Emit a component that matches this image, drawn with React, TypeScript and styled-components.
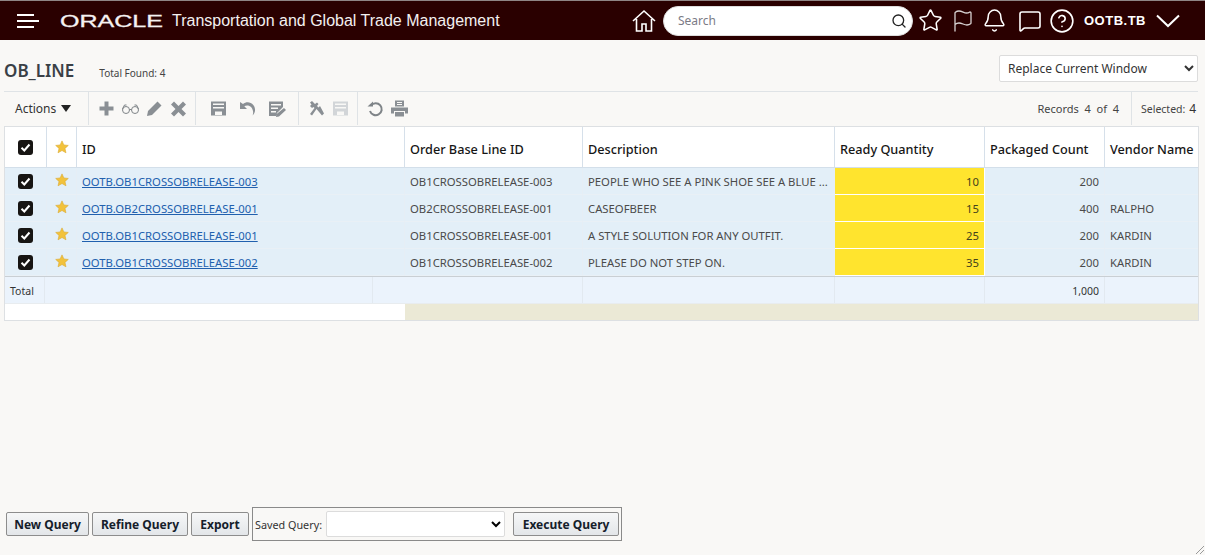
import React from "react";
import styled, { createGlobalStyle } from "styled-components";
import { Star, Flag, Bell, MessageSquare, CircleHelp, Search as SearchIcon } from "lucide-react";

const Global = createGlobalStyle`
  html, body { margin: 0; padding: 0; height: 100%; background: #f9f8f6; overflow: hidden; }
  body { font-family: "Noto Sans", "Open Sans", sans-serif; font-size: 12px; color: #333; }
  #root { height: 100%; }
`;

const Page = styled.div`
  position: relative;
  height: 555px;
  display: flex;
  flex-direction: column;
`;

const TopBar = styled.header`
  height: 39px;
  border-top: 1px solid #8f8585;
  background: #2a0000;
  display: flex;
  align-items: center;
  color: #fff;
`;
const Burger = styled.div`
  width: 22px;
  margin-left: 17px;
  display: flex;
  flex-direction: column;
  gap: 4px;
  span { display: block; height: 2px; background: #fff; width: 17px; }
  span:nth-child(2) { width: 22px; }
`;
const LogoWrap = styled.svg`
  margin-left: 21px;
  width: 105px;
  height: 20px;
  flex: none;
`;
const AppName = styled.div`
  margin-left: 7px;
  font: 16px "Liberation Sans", Arial, sans-serif;
  color: #f3f0f0;
  white-space: nowrap;
  width: 455px;
`;
const IconBtn = styled.div<{ $ml?: number }>`
  display: flex;
  align-items: center;
  margin-left: ${(p) => p.$ml ?? 0}px;
  color: #fff;
`;
const SearchBox = styled.div`
  margin-left: 6px;
  background: #fff;
  border-radius: 15px;
  border: 1px solid #ddd;
  display: flex;
  align-items: center;
  justify-content: space-between;
  padding: 0 5px 0 14px;
  color: #7b7b86;
  font-size: 12px;
  width: 229px;
  height: 28px;
  svg { color: #222; }
`;
const User = styled.div`
  margin-left: 9px;
  font: bold 13px "Liberation Sans", Arial, sans-serif;
  letter-spacing: 0.5px;
  width: 62px;
  white-space: nowrap;
`;

const TitleRow = styled.div`
  height: 51px;
  margin: 0 7px 0 4px;
  border-bottom: 1px solid #dfe3e6;
  display: flex;
  align-items: center;
`;
const Title = styled.h1`
  margin: 9px 0 0;
  font-size: 17px;
  font-weight: 600;
  color: #3a4046;
`;
const TotalFound = styled.span`
  margin: 15px 0 0 25px;
  font-size: 10px;
  color: #444;
`;
const WindowSelect = styled.select`
  margin: 5px 0 0 auto;
  width: 199px;
  height: 27px;
  background: #fff;
  border: 1px solid #dcdcdc;
  border-radius: 2px;
  font: 12px "Noto Sans", sans-serif;
  color: #333;
  padding-left: 4px;
`;

const Toolbar = styled.div`
  height: 33px;
  margin: 0 7px 1px 4px;
  display: flex;
  align-items: stretch;
`;
const ToolGroup = styled.div<{ $w: number; $gap: number; $pad: number; $noLine?: boolean }>`
  width: ${(p) => p.$w}px;
  box-sizing: border-box;
  border-right: ${(p) => (p.$noLine ? "none" : "1px solid #dfe3e6")};
  display: flex;
  align-items: center;
  flex: none;
  padding-left: ${(p) => p.$pad}px;
  gap: ${(p) => p.$gap}px;
  color: #333;
  font-size: 12px;
`;
const Tool = styled.svg<{ $tone?: string }>`
  width: 19px;
  height: 19px;
  flex: none;
  fill: ${(p) => p.$tone ?? "#8a8f94"};
`;
const LineTool = styled(Tool)`
  fill: none;
  stroke: #7f8488;
`;
const Right = styled.div`
  margin-left: auto;
  display: flex;
  align-items: stretch;
`;
const RecordInfo = styled.div`
  display: flex;
  align-items: center;
  padding-right: 12px;
  font-size: 11px;
  color: #444;
  white-space: pre;
`;
const SelectedInfo = styled.div`
  border-left: 1px solid #dfe3e6;
  display: flex;
  align-items: center;
  padding-left: 9px;
  font-size: 10.5px;
  color: #444;
  width: 67px;
  box-sizing: border-box;
  b { font-weight: 400; font-size: 12px; margin-left: 4px; color: #333; }
`;

const TableWrap = styled.div`
  margin: 0 6px 0 4px;
  border: 1px solid #dde0e3;
  background: #fff;
  width: 1195px;
  box-sizing: border-box;
`;
const cols = "42px 30px 328px 178px 252px 150px 120px 93px";
const Row = styled.div<{ $h: number }>`
  display: grid;
  grid-template-columns: ${cols};
  height: ${(p) => p.$h}px;
`;
const HeadCell = styled.div`
  display: flex;
  align-items: center;
  padding: 3px 0 0 5px;
  background: #fff;
  border-right: 1px solid #d6e0ea;
  border-bottom: 1px solid #d3dfea;
  font-size: 12.7px;
  font-weight: 500;
  color: #161616;
  white-space: nowrap;
  &:last-child { border-right: none; }
`;
const CenterHead = styled(HeadCell)`
  justify-content: center;
  padding: 0;
`;
const Cell = styled.div<{ $right?: boolean; $hl?: boolean }>`
  display: flex;
  align-items: center;
  justify-content: ${(p) => (p.$right ? "flex-end" : "flex-start")};
  padding: 0 5px;
  box-sizing: border-box;
  background: ${(p) => (p.$hl ? "#ffe42e" : "#e3eff8")};
  border-right: 1px solid ${(p) => (p.$hl ? "#fff" : "#e6eef5")};
  border-bottom: 1px solid ${(p) => (p.$hl ? "#fff" : "#e9f0f6")};
  font-size: 11.3px;
  color: ${(p) => (p.$hl ? "#44421c" : "#4a4a4a")};
  white-space: nowrap;
  overflow: hidden;
  &:last-child { border-right: none; }
`;
const CenterCell = styled(Cell)`
  justify-content: center;
  padding: 0;
`;
const StarCell = styled(CenterCell)`
  svg { margin-top: -3px; }
`;
const Link = styled.a`
  color: #2160ae;
  text-decoration: underline;
  font-size: 11.3px;
`;
const Check = styled.span`
  width: 15px;
  height: 15px;
  border-radius: 3px;
  background: #171513;
  display: flex;
  align-items: center;
  justify-content: center;
`;
const TotalRow = styled.div`
  display: grid;
  grid-template-columns: 40px 328px 210px 252px 150px 120px 93px;
  height: 27px;
  border-top: 1px solid #c9cfd4;
  box-sizing: border-box;
`;
const TotalCell = styled.div<{ $right?: boolean }>`
  display: flex;
  align-items: center;
  justify-content: ${(p) => (p.$right ? "flex-end" : "flex-start")};
  padding: 1px 5px 0;
  background: #ebf3fc;
  border-right: 1px solid #e2e9f0;
  font-size: 10.5px;
  color: #333;
  &:last-child { border-right: none; }
`;
const BottomRow = styled.div`
  display: grid;
  grid-template-columns: 400px 1fr;
  height: 17px;
  border-top: 1px solid #e8ecef;
  box-sizing: border-box;
`;
const BlankPart = styled.div`background: #fff;`;
const TintPart = styled.div`background: #ebe9d6;`;

const Footer = styled.div`
  margin-top: auto;
  margin-bottom: 14px;
  margin-left: 6px;
  display: flex;
  align-items: center;
  gap: 3px;
`;
const QueryButton = styled.button<{ $w: number }>`
  width: ${(p) => p.$w}px;
  height: 24px;
  padding: 0;
  border: 1px solid #8d8d8d;
  border-radius: 2px;
  background: linear-gradient(#f6f7f8, #e3e6e9);
  font: bold 12px "Noto Sans", sans-serif;
  color: #15202b;
  white-space: nowrap;
`;
const SavedBox = styled.div`
  height: 34px;
  width: 370px;
  box-sizing: border-box;
  border: 1px solid #8a8a8a;
  display: flex;
  align-items: center;
  padding-left: 2px;
  font-size: 10.8px;
  color: #333;
`;
const SavedSelect = styled.select`
  width: 179px;
  height: 26px;
  margin: 0 8px 0 4px;
  background: #fff;
  border: 1px solid #dcdcdc;
  border-radius: 2px;
`;
const Grip = styled.svg`
  position: absolute;
  right: 0;
  bottom: 0;
  width: 12px;
  height: 12px;
  stroke: #9a9a9a;
`;

const CheckBox = () => (
  <Check>
    <svg width="11" height="11" viewBox="0 0 11 11"><path d="M1.5 5.8 4.3 8.5 9.5 2.5" fill="none" stroke="#fff" strokeWidth="2" /></svg>
  </Check>
);
const GoldStar = () => (
  <svg width="14" height="14" viewBox="0 0 24 24"><path d="M12 1.5l3.2 7 7.6.8-5.7 5.1 1.7 7.6L12 18l-6.800 4 1.700-7.600L1.200 9.300l7.600-.8z" fill="#f2c23c" stroke="#dba92c" strokeWidth="1" /></svg>
);

const rows = [
  ["OOTB.OB1CROSSOBRELEASE-003", "OB1CROSSOBRELEASE-003", "PEOPLE WHO SEE A PINK SHOE SEE A BLUE ...", "10", "200", ""],
  ["OOTB.OB2CROSSOBRELEASE-001", "OB2CROSSOBRELEASE-001", "CASEOFBEER", "15", "400", "RALPHO"],
  ["OOTB.OB1CROSSOBRELEASE-001", "OB1CROSSOBRELEASE-001", "A STYLE SOLUTION FOR ANY OUTFIT.", "25", "200", "KARDIN"],
  ["OOTB.OB1CROSSOBRELEASE-002", "OB1CROSSOBRELEASE-002", "PLEASE DO NOT STEP ON.", "35", "200", "KARDIN"],
];

export default function App() {
  return (
    <Page>
      <Global />
      <TopBar>
        <Burger><span /><span /><span /></Burger>
        <LogoWrap viewBox="0 0 105 20">
          <text x="0" y="15.5" fontFamily="Liberation Sans" fontSize="17" fill="#f5f2f2" stroke="#f5f2f2" strokeWidth="0.3" textLength="103" lengthAdjust="spacingAndGlyphs">ORACLE</text>
        </LogoWrap>
        <AppName>Transportation and Global Trade Management</AppName>
        <IconBtn $ml={4}>
          <svg width="26" height="26" viewBox="0 0 26 26" fill="none" stroke="#fff" strokeWidth="1.6">
            <path d="M2 13 13 3l11 10M5.500 11v12h5.500v-7h4v7h5.500V11" />
          </svg>
        </IconBtn>
        <SearchBox>
          Search
          <SearchIcon size={16} strokeWidth={2} />
        </SearchBox>
        <IconBtn $ml={5}><Star size={25} strokeWidth={1.5} /></IconBtn>
        <IconBtn $ml={8}><Flag size={24} strokeWidth={1.3} color="#d8d2d2" /></IconBtn>
        <IconBtn $ml={7}><Bell size={25} strokeWidth={1.4} /></IconBtn>
        <IconBtn $ml={11}><MessageSquare size={24} strokeWidth={1.6} /></IconBtn>
        <IconBtn $ml={7}><CircleHelp size={26} strokeWidth={1.5} /></IconBtn>
        <User>OOTB.TB</User>
        <IconBtn $ml={10}>
          <svg width="24" height="14" viewBox="0 0 24 14" fill="none" stroke="#fff" strokeWidth="2"><path d="M1 1.500 12 12 23 1.500" /></svg>
        </IconBtn>
      </TopBar>

      <TitleRow>
        <Title>OB_LINE</Title>
        <TotalFound>Total Found: 4</TotalFound>
        <WindowSelect defaultValue="r"><option value="r">Replace Current Window</option></WindowSelect>
      </TitleRow>

      <Toolbar>
        <ToolGroup $w={85} $gap={5} $pad={11}>
          Actions
          <svg width="10" height="8" viewBox="0 0 10 8"><path d="M0 0h10L5 7z" fill="#222" /></svg>
        </ToolGroup>
        <ToolGroup $w={107} $gap={5} $pad={8}>
          <Tool viewBox="0 0 19 19"><path d="M7.500 2.500h4v5h5v4h-5v5h-4v-5h-5v-4h5z" /></Tool>
          <LineTool viewBox="0 0 19 19"><circle cx="5" cy="11" r="3.500" /><circle cx="14" cy="11" r="3.500" /><path d="M8.500 10.500h2M1.500 10l2-4h2M17.500 10l-2-4h-2" /></LineTool>
          <Tool viewBox="0 0 19 19"><path d="M2 17l1-5L12.500 2.500l4 4L7 16z" /></Tool>
          <Tool viewBox="0 0 19 19"><path d="M5 2.500l4.500 4.500L14 2.500l3 3L12.500 10l4.500 4.500-3 3L9.500 13 5 17.500l-3-3L6.500 10 2 5.500z" /></Tool>
        </ToolGroup>
        <ToolGroup $w={103} $gap={10} $pad={13}>
          <Tool viewBox="0 0 19 19"><path fillRule="evenodd" d="M2 2.500h15v14H2zM4 4.500v1.500h11V4.500zM4 8v1.500h11V8zM6 12.500V16h7v-3.500z" /></Tool>
          <Tool viewBox="0 0 19 19"><path d="M2 3v7h7L6.300 7.300C9 5.500 14 6.500 15 12c.3 1.500.2 3-.5 4.500 3-2.500 3.500-7 .8-10.500C12.500 2.500 8 2.500 5 5z" /></Tool>
          <Tool viewBox="0 0 19 19"><path d="M2 2.500h14V8l-6 6-1 3H2zM4 5v1.500h10V5zM4 8.500V10h7V8.500zM4 12v1.500h5V12zM17 9l2 2-7 6.500-3 .5 .6-3z" /></Tool>
        </ToolGroup>
        <ToolGroup $w={59} $gap={5} $pad={8}>
          <Tool viewBox="0 0 19 19"><path d="M3 3.500 5 2l3 3 2-1.500 1.500 1.500L10 7l1.500 1.500L13 7l4 7.500-2 2L9.500 10 5 16.500l-2-1.500 4.500-6L6.500 8 5 9 3 7l1.500-1.500z" /></Tool>
          <Tool $tone="#d2d5d8" viewBox="0 0 19 19"><path fillRule="evenodd" d="M2 2.500h15v14H2zM4 4.500v1.500h11V4.500zM4 8v1.500h11V8zM6 12.500V16h7v-3.500z" /></Tool>
        </ToolGroup>
        <ToolGroup $w={80} $gap={5} $pad={8} $noLine>
          <LineTool strokeWidth={2} viewBox="0 0 19 19"><path d="M5 6.500a6 6 0 1 1-1 5.500" /><path d="M1.500 7.500h5.500V2.500" fill="#7f8488" stroke="none" /></LineTool>
          <Tool viewBox="0 0 19 19"><path fillRule="evenodd" d="M5 1.500h9v6H5zM7 3v1h5V3zM7 5v1h5V5zM1 8.500h17v6h-3V12H4v2.500H1zM5 13h9v4.500H5z" /></Tool>
        </ToolGroup>
        <Right>
          <RecordInfo>Records  4  of  4</RecordInfo>
          <SelectedInfo>Selected:<b>4</b></SelectedInfo>
        </Right>
      </Toolbar>

      <TableWrap>
        <Row $h={41}>
          <CenterHead><CheckBox /></CenterHead>
          <CenterHead><GoldStar /></CenterHead>
          <HeadCell>ID</HeadCell>
          <HeadCell>Order Base Line ID</HeadCell>
          <HeadCell>Description</HeadCell>
          <HeadCell>Ready Quantity</HeadCell>
          <HeadCell>Packaged Count</HeadCell>
          <HeadCell>Vendor Name</HeadCell>
        </Row>
        {rows.map((r) => (
          <Row $h={27} key={r[0]}>
            <CenterCell><CheckBox /></CenterCell>
            <StarCell><GoldStar /></StarCell>
            <Cell><Link href="#">{r[0]}</Link></Cell>
            <Cell>{r[1]}</Cell>
            <Cell>{r[2]}</Cell>
            <Cell $right $hl>{r[3]}</Cell>
            <Cell $right>{r[4]}</Cell>
            <Cell>{r[5]}</Cell>
          </Row>
        ))}
        <TotalRow>
          <TotalCell>Total</TotalCell>
          <TotalCell />
          <TotalCell />
          <TotalCell />
          <TotalCell />
          <TotalCell $right>1,000</TotalCell>
          <TotalCell />
        </TotalRow>
        <BottomRow>
          <BlankPart />
          <TintPart />
        </BottomRow>
      </TableWrap>

      <Footer>
        <QueryButton $w={83}>New Query</QueryButton>
        <QueryButton $w={96}>Refine Query</QueryButton>
        <QueryButton $w={58}>Export</QueryButton>
        <SavedBox>
          Saved Query:
          <SavedSelect />
          <QueryButton $w={106}>Execute Query</QueryButton>
        </SavedBox>
      </Footer>
      <Grip viewBox="0 0 12 12"><path d="M11 3 3 11M11 7 7 11" /></Grip>
    </Page>
  );
}
